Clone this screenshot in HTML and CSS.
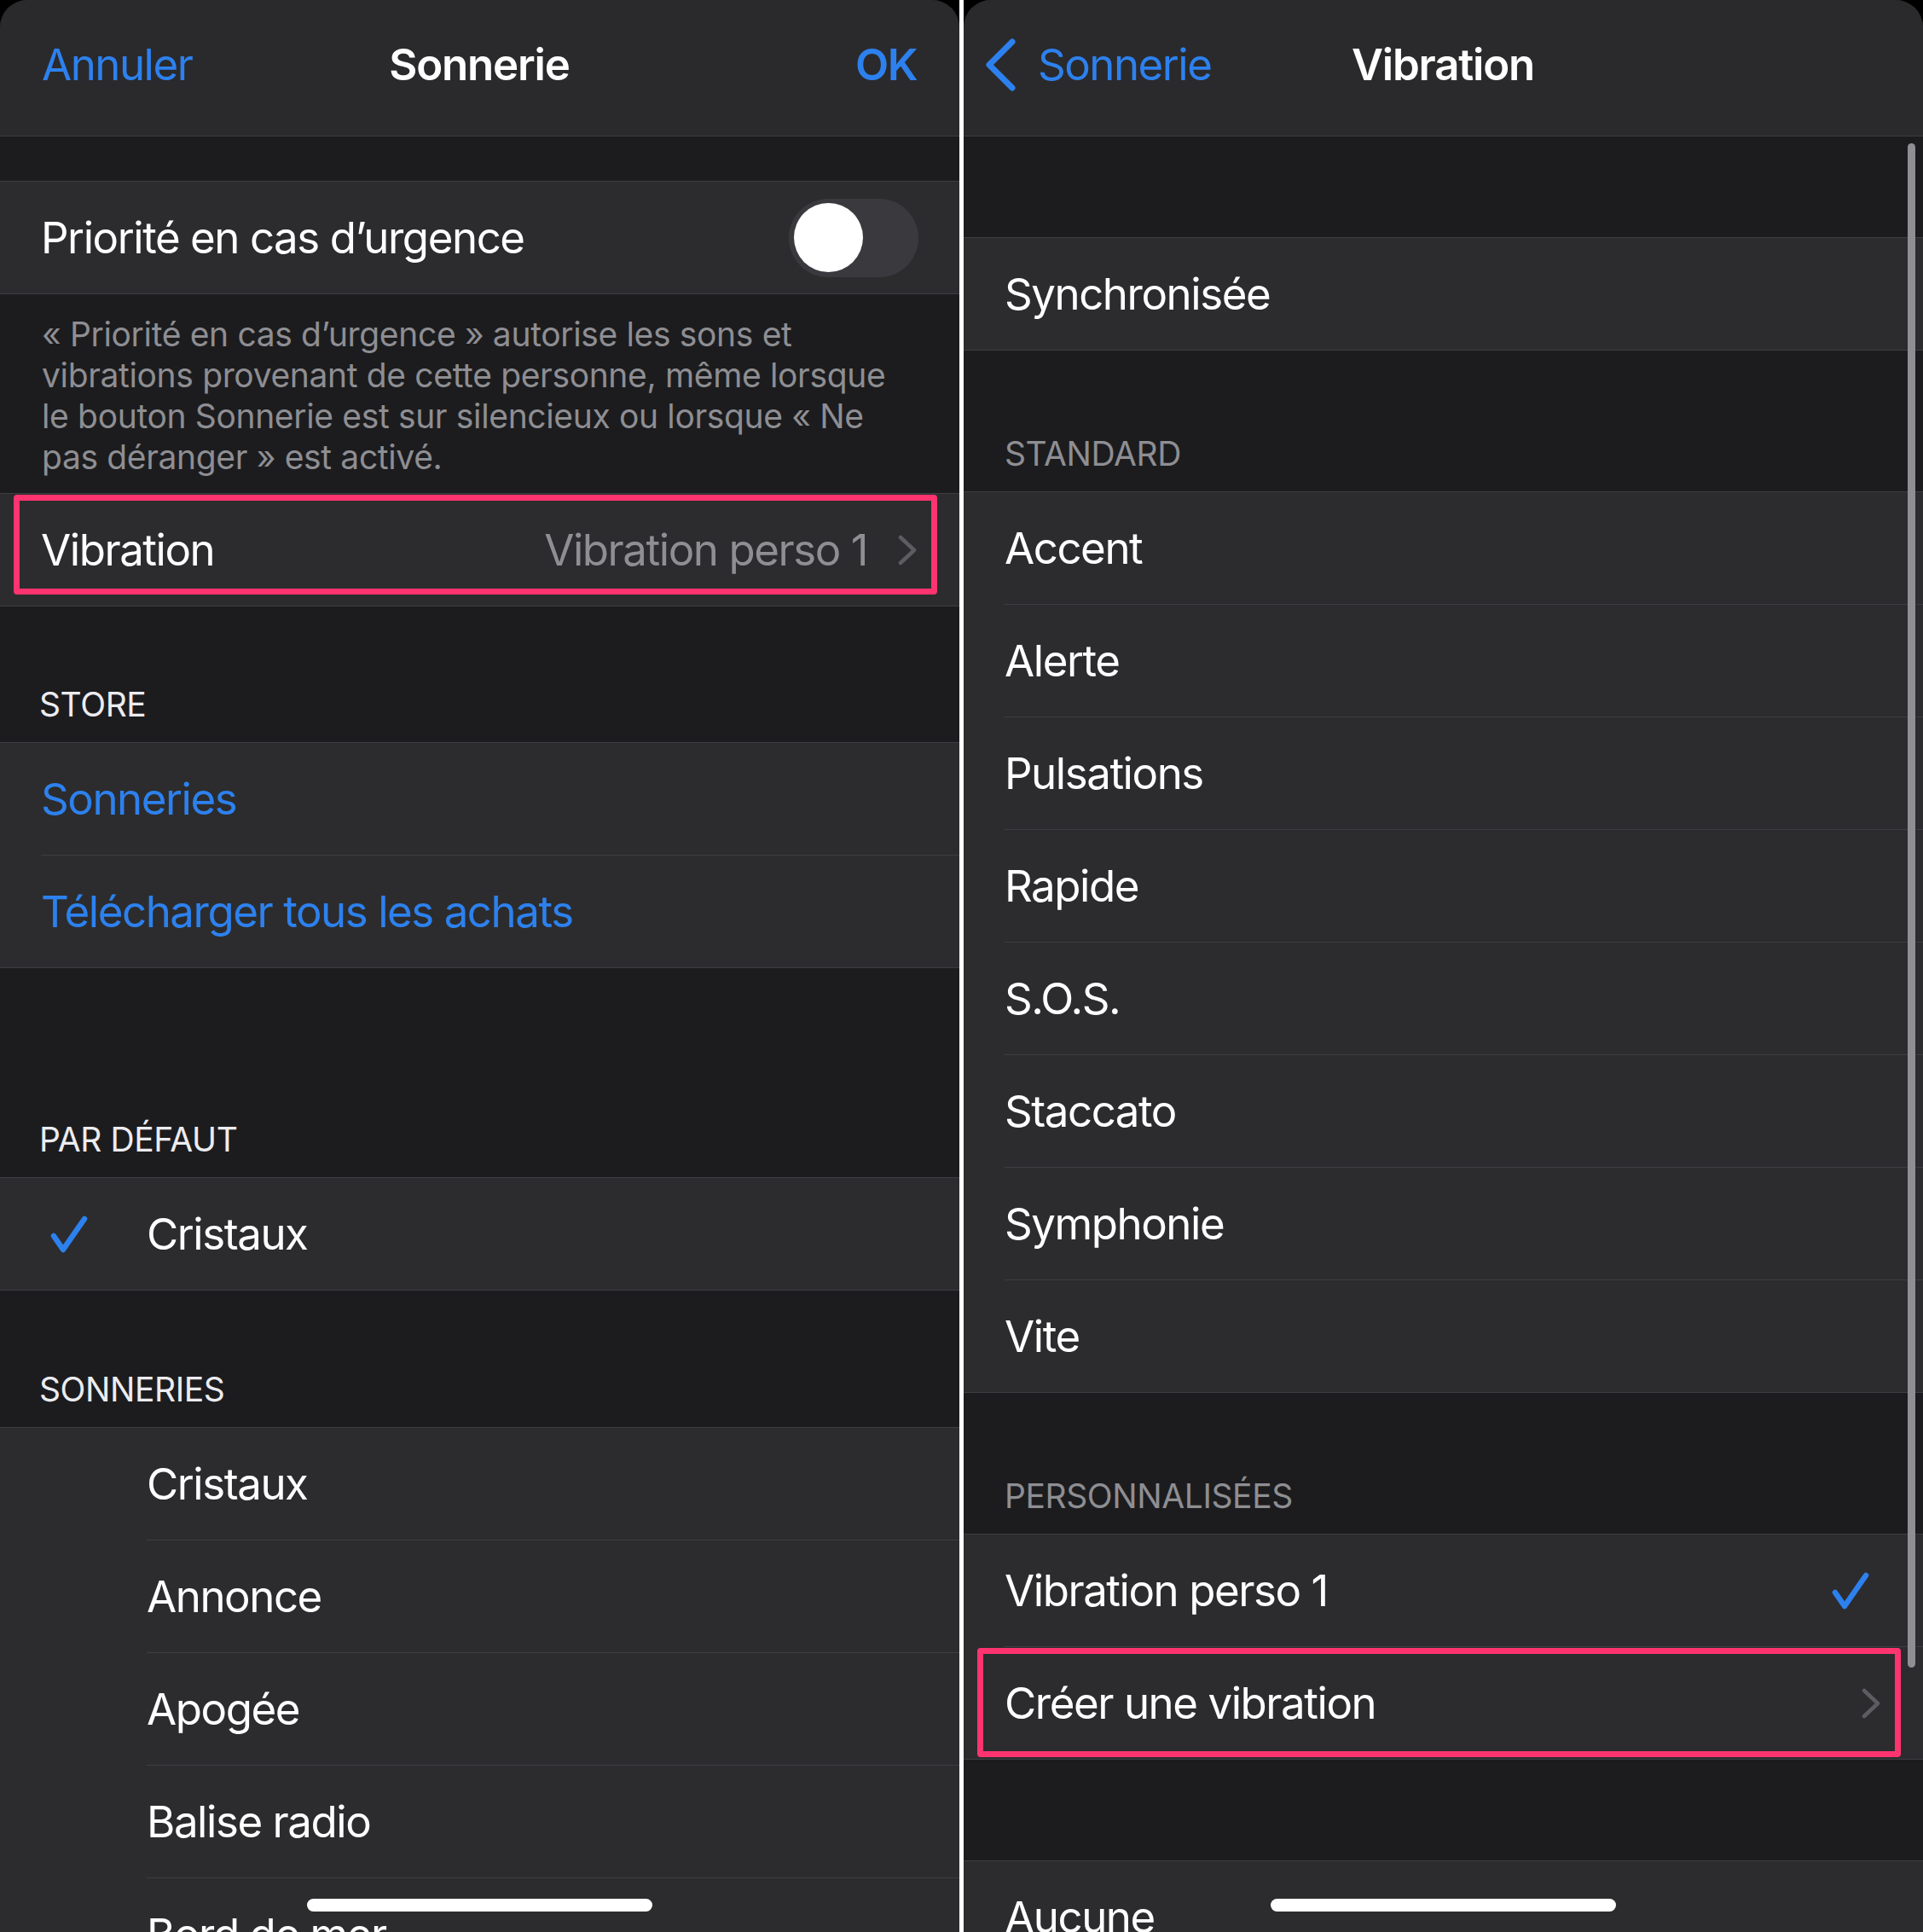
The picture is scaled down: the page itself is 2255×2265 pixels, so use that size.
FILE: index.html
```html
<!DOCTYPE html>
<html lang="fr">
<head>
    <meta charset="UTF-8">
    <meta name="viewport" content="width=device-width, initial-scale=1.0">
    <title>Sonnerie et vibration</title>
    <link rel="stylesheet" href="styles.css">
</head>
<body>
    <div class="screens">
        <!-- écran de gauche : Sonnerie -->
        <section class="panel">
            <div class="screen">
                <header class="nav">
                    <span class="nav-left link">Annuler</span>
                    <span class="nav-title">Sonnerie</span>
                    <span class="nav-right link bold">OK</span>
                </header>

                <div class="gap g52"></div>
                <div class="group">
                    <div class="row">
                        <div class="cell pad-toggle">
                            <span class="label">Priorité en cas d’urgence</span>
                            <span class="toggle"><span class="knob"></span></span>
                        </div>
                    </div>
                </div>

                <p class="footnote">« Priorité en cas d’urgence » autorise les sons et<br>vibrations provenant de cette personne, même lorsque<br>le bouton Sonnerie est sur silencieux ou lorsque « Ne<br>pas déranger » est activé.</p>

                <div class="group">
                    <div class="row">
                        <div class="cell pad-chevron">
                            <span class="label">Vibration</span>
                            <span class="value">Vibration perso 1</span>
                            <svg class="chevron" viewBox="0 0 22 36"><path d="M3 3 L19 18 L3 33"/></svg>
                        </div>
                        <div class="mark mark-short"></div>
                    </div>
                </div>

                <div class="gap g159"><span class="header">Store</span></div>
                <div class="group">
                    <div class="row"><div class="cell"><span class="label link">Sonneries</span></div></div>
                    <div class="row"><div class="cell"><span class="label link">Télécharger tous les achats</span></div></div>
                </div>

                <div class="gap g245"><span class="header">Par défaut</span></div>
                <div class="group">
                    <div class="row">
                        <span class="lead">
                            <svg class="check" viewBox="0 0 46 46"><path d="M5 25 L16 41 L41 5"/></svg>
                        </span>
                        <div class="cell"><span class="label">Cristaux</span></div>
                    </div>
                </div>

                <div class="gap g160"><span class="header">Sonneries</span></div>
                <div class="group">
                    <div class="row"><span class="lead"></span><div class="cell"><span class="label">Cristaux</span></div></div>
                    <div class="row"><span class="lead"></span><div class="cell"><span class="label">Annonce</span></div></div>
                    <div class="row"><span class="lead"></span><div class="cell"><span class="label">Apogée</span></div></div>
                    <div class="row"><span class="lead"></span><div class="cell"><span class="label">Balise radio</span></div></div>
                    <div class="row"><span class="lead"></span><div class="cell"><span class="label">Bord de mer</span></div></div>
                </div>

                <div class="home-bar"></div>
            </div>
        </section>

        <!-- écran de droite : Vibration -->
        <section class="panel">
            <div class="screen">
                <header class="nav">
                    <span class="nav-left link back">
                        <svg class="back-icon" viewBox="0 0 40 62"><path d="M34 4 L7 31 L34 58"/></svg>
                        Sonnerie
                    </span>
                    <span class="nav-title">Vibration</span>
                    <span class="nav-right"></span>
                </header>

                <div class="gap g118"></div>
                <div class="group">
                    <div class="row"><div class="cell"><span class="label">Synchronisée</span></div></div>
                </div>

                <div class="gap g165 right"><span class="header muted">Standard</span></div>
                <div class="group">
                    <div class="row"><div class="cell"><span class="label">Accent</span></div></div>
                    <div class="row"><div class="cell"><span class="label">Alerte</span></div></div>
                    <div class="row"><div class="cell"><span class="label">Pulsations</span></div></div>
                    <div class="row"><div class="cell"><span class="label">Rapide</span></div></div>
                    <div class="row"><div class="cell"><span class="label">S.O.S.</span></div></div>
                    <div class="row"><div class="cell"><span class="label">Staccato</span></div></div>
                    <div class="row"><div class="cell"><span class="label">Symphonie</span></div></div>
                    <div class="row"><div class="cell"><span class="label">Vite</span></div></div>
                </div>

                <div class="gap g165 right"><span class="header muted">Personnalisées</span></div>
                <div class="group">
                    <div class="row">
                        <div class="cell pad-check">
                            <span class="label">Vibration perso 1</span>
                            <svg class="check" viewBox="0 0 46 46"><path d="M5 25 L16 41 L41 5"/></svg>
                        </div>
                    </div>
                    <div class="row">
                        <div class="cell pad-chevron">
                            <span class="label">Créer une vibration</span>
                            <svg class="chevron" viewBox="0 0 22 36"><path d="M3 3 L19 18 L3 33"/></svg>
                        </div>
                        <div class="mark"></div>
                    </div>
                </div>

                <div class="gap g118"></div>
                <div class="group">
                    <div class="row"><div class="cell"><span class="label">Aucune</span></div></div>
                </div>

                <div class="scrollbar"></div>
                <div class="home-bar"></div>
            </div>
        </section>
    </div>
</body>
</html>
```

FILE: styles.css
```css
body {
    margin: 0;
    background-color: #ffffff;
    font-family: Inter, "Liberation Sans", sans-serif;
    color: #ffffff;
}
.screens {
    display: flex;
    gap: 5px;
    height: 2265px;
    overflow: hidden;
}
.panel {
    width: 1125px;
    height: 2265px;
    background-color: #000000;
    flex-shrink: 0;
}
.screen {
    position: relative;
    height: 100%;
    overflow: hidden;
    background-color: #1c1c1e;
    border-radius: 32px 32px 0 0;
}

/* barre de navigation */
.nav {
    display: grid;
    grid-template-columns: 1fr auto 1fr;
    align-items: center;
    height: 151px;
    padding: 0 50px 8px 49px;
    background-color: #2a2a2c;
    border-bottom: 1px solid #3e3e42;
    font-size: 51px;
    letter-spacing: -1.5px;
}
.nav-left {
    justify-self: start;
}
.nav-right {
    justify-self: end;
}
.nav-title {
    font-weight: 600;
    letter-spacing: -1.2px;
}
.link {
    color: #2d81ee;
}
.bold {
    font-weight: 600;
}
.back {
    display: flex;
    align-items: center;
    margin-left: -26px;
}
.back-icon {
    width: 40px;
    height: 62px;
    margin-right: 24px;
    fill: none;
    stroke: #2d81ee;
    stroke-width: 7;
    stroke-linecap: round;
    stroke-linejoin: round;
}

/* sections */
.gap {
    display: flex;
    align-items: flex-end;
    padding: 0 46px 20px;
    box-sizing: border-box;
}
.gap.right {
    padding-left: 48px;
}
.g52 { height: 52px; }
.g118 { height: 118px; }
.g159 { height: 159px; }
.g160 { height: 160px; }
.g165 { height: 165px; }
.g245 { height: 245px; }
.header {
    font-size: 39px;
    line-height: 48px;
    text-transform: uppercase;
    color: #ececf0;
    letter-spacing: -0.4px;
}
.header.muted {
    color: #8e8e93;
}
.group {
    background-color: #2c2c2e;
    border-top: 1px solid #3e3e42;
    border-bottom: 1px solid #3e3e42;
}
.row {
    position: relative;
    display: flex;
    height: 132px;
    padding-left: 48px;
}
.row:last-child {
    height: 131px;
}
.cell {
    flex: 1;
    display: flex;
    align-items: center;
    padding-right: 46px;
    border-bottom: 1px solid #3e3e42;
    font-size: 51px;
    letter-spacing: -1.45px;
}
.row:last-child .cell {
    border-bottom: none;
}
.label {
    flex: 1;
    white-space: nowrap;
}
.value {
    color: #8e8e93;
    margin-right: 36px;
}
.lead {
    width: 124px;
    display: flex;
    align-items: center;
}
.pad-toggle {
    padding-right: 48px;
}
.pad-chevron {
    padding-right: 50px;
}
.pad-check {
    padding-right: 62px;
}
.chevron {
    width: 22px;
    height: 36px;
    fill: none;
    stroke: #5c5c61;
    stroke-width: 4.5;
    stroke-linecap: round;
    stroke-linejoin: round;
}
.check {
    width: 46px;
    height: 46px;
    fill: none;
    stroke: #2d81ee;
    stroke-width: 6.5;
    stroke-linecap: round;
    stroke-linejoin: round;
}
.lead .check {
    margin-left: 10px;
}
.toggle {
    display: flex;
    align-items: center;
    width: 152px;
    height: 92px;
    padding: 0 6px;
    box-sizing: border-box;
    border-radius: 46px;
    background-color: #3a3a3e;
}
.knob {
    width: 81px;
    height: 81px;
    border-radius: 50%;
    background-color: #ffffff;
}

/* texte d'explication */
.footnote {
    margin: 0;
    padding: 23px 48px 18px 49px;
    font-size: 39px;
    line-height: 48px;
    color: #8e8e93;
    white-space: nowrap;
    letter-spacing: -0.35px;
}

/* cadre rose d'annotation */
.mark {
    position: absolute;
    left: 16px;
    right: 26px;
    top: 1px;
    bottom: 2px;
    border: 7px solid #fd3470;
    border-radius: 4px;
}
.mark-short {
    bottom: 13px;
}

.scrollbar {
    position: absolute;
    top: 168px;
    left: 1107px;
    width: 9px;
    height: 1787px;
    border-radius: 5px;
    background-color: #8e8e93;
}
.home-bar {
    position: absolute;
    left: 360px;
    bottom: 24px;
    width: 405px;
    height: 15px;
    border-radius: 8px;
    background-color: #ffffff;
}
```
